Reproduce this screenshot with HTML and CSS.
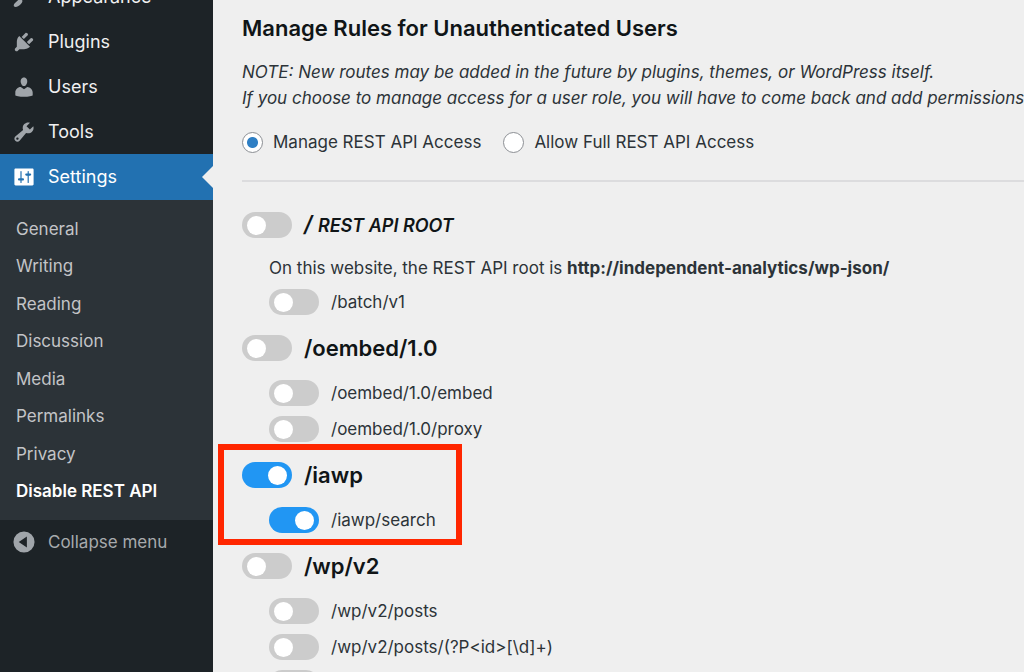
FILE: index.html
```html
<!DOCTYPE html>
<html lang="en">
<head>
<meta charset="utf-8">
<title>Disable REST API</title>
<link rel="stylesheet" href="styles.css">
</head>
<body>
<div class="layout">
  <nav class="sidebar" aria-label="Main menu">
    <ul class="menu">
      <li><a class="menu-link" href="#"><svg class="icon" viewBox="0 0 20 20"><path d="M14.48 11.06 7.41 3.99l1.5-1.5c.5-.56 2.3-.47 3.51.32 1.21.8 1.43 1.28 2 2.1 1.18 1.7 1.56 4.65.06 6.15zM6.6 11.2c1.200.3 2 1.200 2.100 2.300-.4 1.500-1.800 3.300-3.700 4.300-1.100.6-2.400.9-3.200.2-.7-.8-.3-1.900.5-2.800z"/></svg>Appearance</a></li>
      <li><a class="menu-link" href="#"><svg class="icon" viewBox="0 0 20 20"><path d="M13.11 4.36 9.87 7.6 8 5.73l3.24-3.24c.35-.34 1.05-.2 1.56.32.52.51.66 1.21.31 1.55zm-8 1.77.91-1.12 9.01 9.01-1.19.84c-.71.71-2.63 1.16-3.82 1.16H6.14L4.9 17.26c-.59.59-1.54.59-2.12 0-.59-.58-.59-1.53 0-2.12l1.24-1.24v-3.88c0-1.13.4-3.19 1.09-3.89zm7.26 3.97 3.24-3.24c.34-.35 1.04-.21 1.55.31.52.51.66 1.21.31 1.55l-3.24 3.25z"/></svg>Plugins</a></li>
      <li><a class="menu-link" href="#"><svg class="icon" viewBox="0 0 20 20"><path d="M10 9.25c-2.27 0-2.73-3.44-2.73-3.44C7 4.02 7.82 2 9.97 2c2.16 0 2.98 2.02 2.71 3.81 0 0-.41 3.44-2.68 3.44zm0 2.57L12.72 10c2.39 0 4.52 2.33 4.52 4.53v2.49s-3.65 1.13-7.24 1.13c-3.65 0-7.24-1.13-7.24-1.13v-2.49c0-2.25 1.94-4.48 4.47-4.48z"/></svg>Users</a></li>
      <li><a class="menu-link" href="#"><svg class="icon" viewBox="0 0 20 20"><path d="M16.68 9.77c-1.34 1.34-3.3 1.67-4.95.99l-5.41 6.52c-.99.99-2.59.99-3.58 0s-.99-2.59 0-3.57l6.52-5.42c-.68-1.65-.35-3.61.99-4.95 1.28-1.28 3.12-1.62 4.72-1.06l-2.89 2.89 2.82 2.82 2.86-2.87c.53 1.58.18 3.39-1.08 4.65zM3.81 16.21c.4.39 1.04.39 1.43 0 .4-.4.4-1.04 0-1.43-.39-.4-1.03-.4-1.43 0-.39.39-.39 1.03 0 1.43z"/></svg>Tools</a></li>
      <li>
        <a class="menu-link current" href="#"><svg class="icon" viewBox="0 0 20 20"><path fill-rule="evenodd" d="M18 16V4c0-.55-.45-1-1-1H3c-.55 0-1 .45-1 1v12c0 .55.45 1 1 1h14c.55 0 1-.45 1-1zM8 11h1c.55 0 1 .45 1 1s-.45 1-1 1H8v1.5c0 .28-.22.5-.5.5s-.5-.22-.5-.5V13H6c-.55 0-1-.45-1-1s.45-1 1-1h1V5.500c0-.28.22-.5.5-.5s.5.22.5.5V11zm5-2h-1c-.55 0-1-.45-1-1s.45-1 1-1h1V5.500c0-.28.22-.5.5-.5s.5.22.5.5V7h1c.55 0 1 .45 1 1s-.45 1-1 1h-1v5.500c0 .28-.22.5-.5.5s-.5-.22-.5-.5V9z"/></svg>Settings</a>
        <ul class="submenu">
          <li><a href="#">General</a></li>
          <li><a href="#">Writing</a></li>
          <li><a href="#">Reading</a></li>
          <li><a href="#">Discussion</a></li>
          <li><a href="#">Media</a></li>
          <li><a href="#">Permalinks</a></li>
          <li><a href="#">Privacy</a></li>
          <li><a class="active" href="#">Disable REST API</a></li>
        </ul>
      </li>
    </ul>
    <button class="collapse" type="button"><svg class="icon" viewBox="0 0 20 20"><path fill-rule="evenodd" d="M10 1.200a8.800 8.800 0 1 0 0 17.600a8.800 8.800 0 1 0 0-17.600zM12.400 5.500v9L5.600 10z"/></svg>Collapse menu</button>
  </nav>

  <main class="content">
    <h2 class="title">Manage Rules for Unauthenticated Users</h2>
    <p class="note">NOTE: New routes may be added in the future by plugins, themes, or WordPress itself.<br>If you choose to manage access for a user role, you will have to come back and add permissions for any new routes.</p>
    <div class="modes">
      <label class="mode"><input class="radio" type="radio" name="mode" checked>Manage REST API Access</label>
      <label class="mode"><input class="radio" type="radio" name="mode">Allow Full REST API Access</label>
    </div>
    <hr class="rule">

    <section class="group">
      <h3 class="group-head"><label class="row"><input class="toggle" type="checkbox"><em>/ <span class="root">REST API ROOT</span></em></label></h3>
      <p class="hint">On this website, the REST API root is <strong>http://independent-analytics/wp-json/</strong></p>
      <ul class="routes">
        <li><label class="row"><input class="toggle" type="checkbox">/batch/v1</label></li>
      </ul>
    </section>
    <section class="group">
      <h3 class="group-head"><label class="row"><input class="toggle" type="checkbox">/oembed/1.0</label></h3>
      <ul class="routes">
        <li><label class="row"><input class="toggle" type="checkbox">/oembed/1.0/embed</label></li>
        <li><label class="row"><input class="toggle" type="checkbox">/oembed/1.0/proxy</label></li>
      </ul>
    </section>
    <section class="group highlighted">
      <h3 class="group-head"><label class="row"><input class="toggle" type="checkbox" checked>/iawp</label></h3>
      <ul class="routes">
        <li><label class="row"><input class="toggle" type="checkbox" checked>/iawp/search</label></li>
      </ul>
    </section>
    <section class="group">
      <h3 class="group-head"><label class="row"><input class="toggle" type="checkbox">/wp/v2</label></h3>
      <ul class="routes">
        <li><label class="row"><input class="toggle" type="checkbox">/wp/v2/posts</label></li>
        <li><label class="row"><input class="toggle" type="checkbox">/wp/v2/posts/(?P&lt;id&gt;[\d]+)</label></li>
        <li><label class="row"><input class="toggle" type="checkbox" aria-label="Next route"></label></li>
      </ul>
    </section>
  </main>
</div>
</body>
</html>
```

FILE: styles.css
```css
*, *::before, *::after { box-sizing: border-box; }

body {
  margin: 0;
  height: 100vh;
  overflow: hidden;
  background: #efefef;
  color: #2c3338;
  font: 17px/26px Inter, "Liberation Sans", sans-serif;
}

ul, h2, h3, p { margin: 0; padding: 0; list-style: none; }

.layout { display: flex; height: 100%; }

/* Sidebar */
.sidebar {
  flex: 0 0 213px;
  overflow: hidden;
  background: #1d2327;
}

.menu { margin-top: -26px; }

.menu-link, .collapse {
  display: flex;
  align-items: center;
  gap: 12px;
  width: 100%;
  height: 45px;
  padding: 0 12px;
  color: #f0f0f1;
  font-size: 18px;
  text-decoration: none;
}

.icon { width: 24px; height: 24px; fill: #a0a5aa; }

.current {
  position: relative;
  height: 46px;
  background: #2271b1;
  color: #fff;
}

.current .icon { fill: #fff; }

.current::after {
  content: "";
  position: absolute;
  right: 0;
  top: 50%;
  margin-top: -11px;
  border: 11px solid transparent;
  border-left-width: 0;
  border-right-color: #efefef;
}

.submenu {
  display: grid;
  grid-auto-rows: 1fr;
  min-height: 320px;
  padding: 10px 0;
  background: #2c3338;
}

.submenu a {
  display: flex;
  align-items: center;
  height: 100%;
  padding: 0 16px;
  color: #c3c4c7;
  text-decoration: none;
}

.submenu .active { color: #fff; font-weight: 600; }

.collapse {
  height: 43px;
  border: 0;
  background: none;
  color: #a7aaad;
  font-family: inherit;
  font-size: 17px;
}

/* Content */
.content {
  flex: 1;
  min-width: 0;
  overflow: hidden;
  padding: 12px 0 0 29px;
}

.title {
  color: #101517;
  font-size: 22px;
  font-weight: 600;
  line-height: 32px;
}

.note {
  margin-top: 15px;
  font-style: italic;
  white-space: nowrap;
}

.modes { display: flex; gap: 22px; margin-top: 18px; }

.mode { display: flex; align-items: center; gap: 10px; }

.radio {
  appearance: none;
  width: 21px;
  height: 21px;
  margin: 0;
  border: 1px solid #8c8f94;
  border-radius: 50%;
  background: #fff;
}

.radio:checked { background: radial-gradient(circle, #2f7fc4 5px, #fff 6px); }

.rule {
  height: 2px;
  margin: 25px 0 16px;
  border: 0;
  background: #dcdcde;
}

.group { position: relative; margin-bottom: 1px; }

.group-head {
  display: flex;
  align-items: center;
  height: 54px;
  color: #101517;
  font-size: 22px;
  font-weight: 600;
}

.root { font-size: 18px; }

.row { display: flex; align-items: center; gap: 12px; }

.hint { height: 32px; padding: 3px 0 0 27px; }

.routes { padding-left: 27px; }

.routes .row { height: 36px; }

.toggle {
  appearance: none;
  display: flex;
  align-items: center;
  width: 50px;
  height: 26px;
  margin: 0;
  padding: 0 5px;
  border-radius: 13px;
  background: #ccc;
}

.toggle::before {
  content: "";
  width: 19px;
  height: 19px;
  border-radius: 50%;
  background: #fff;
}

.toggle:checked { justify-content: flex-end; background: #2196f3; }

/* Callout frame round the enabled group */
.highlighted::after {
  content: "";
  position: absolute;
  top: -4px;
  left: -24px;
  bottom: -7px;
  width: 244px;
  border: 6px solid #ff2600;
  pointer-events: none;
}
```
